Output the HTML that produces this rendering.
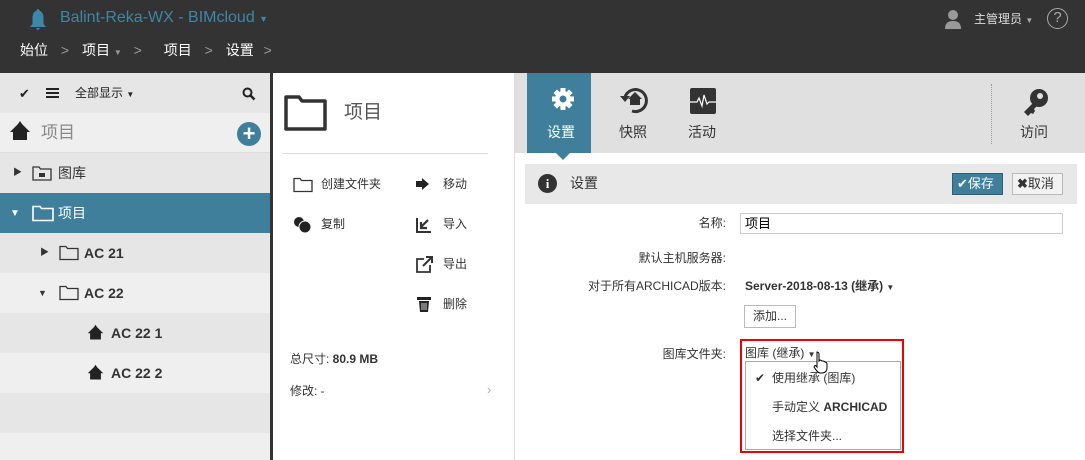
<!DOCTYPE html>
<html><head><meta charset="utf-8"><style>
*{margin:0;padding:0;box-sizing:border-box}
body{width:1085px;height:460px;overflow:hidden;position:relative;font-family:"Liberation Sans","Noto Sans CJK SC",sans-serif;font-size:12px;color:#333;background:#fff}
.a{position:absolute}
.t{position:absolute;white-space:nowrap;line-height:1.2}
.r{position:absolute;white-space:nowrap;line-height:1.2;right:359px;text-align:right}
.row{position:absolute;left:0;width:270px;height:40px}
</style></head><body>
<div class="a" style="left:0;top:0;width:1085px;height:73px;background:#333"></div>
<svg class="a" style="left:28px;top:8px" width="20" height="24" viewBox="0 0 20 24"><path d="M10 1c-1 0-1.5 1-1.5 1.8C5 4 4.5 7 4.5 11v5L2 19h16l-2.5-3v-5c0-4-.5-7-4-8.2C11.5 2 11 1 10 1z M8 20h4l-2 2.5z" fill="#3f87a6"/></svg>
<div class="t" style="left:60px;top:8px;font-size:16px;color:#3f87a6">Balint-Reka-WX - BIMcloud <span style="font-size:9px">▼</span></div>
<div class="t" style="left:20px;top:42px;font-size:14px;color:#fff">始位 <span style="color:#999;margin:0 9px">&gt;</span> 项目 <span style="color:#999;font-size:8px">▼</span> <span style="color:#999;margin:0 18px 0 8px">&gt;</span> 项目 <span style="color:#999;margin:0 9px">&gt;</span> 设置 <span style="color:#999;margin:0 6px">&gt;</span></div>
<svg class="a" style="left:944px;top:9px" width="18" height="20" viewBox="0 0 18 20"><circle cx="9" cy="6" r="5" fill="#999"/><path d="M1 20c0-6 3-8 8-8s8 2 8 8z" fill="#999"/></svg>
<div class="t" style="left:974px;top:12px;font-size:12px;color:#ddd">主管理员 <span style="font-size:8px;color:#aaa">▼</span></div>
<div class="a" style="left:1047px;top:8px;width:21px;height:21px;border:1.5px solid #aaa;border-radius:50%;color:#aaa;font-size:15px;text-align:center;line-height:18px">?</div>

<div class="a" style="left:0;top:73px;width:270px;height:387px;background:#efefef"></div>
<div class="row" style="top:73px;background:#e6e6e6"></div>
<div class="t" style="left:19px;top:86px;font-size:13px;color:#222">✔</div>
<div class="a" style="left:46px;top:88px;width:13px;height:2px;background:#222;box-shadow:0 4px #222,0 8px #222"></div>
<div class="t" style="left:75px;top:86px;font-size:12px;color:#222">全部显示 <span style="font-size:8px">▼</span></div>
<svg class="a" style="left:242px;top:87px" width="14" height="14"><circle cx="5.5" cy="5.5" r="4" fill="none" stroke="#222" stroke-width="2"/><path d="M8.5 8.5l4 4" stroke="#222" stroke-width="2.5"/></svg>
<div class="row" style="top:113px;background:#efefef;border-bottom:1px solid #ddd"></div>
<svg class="a" style="left:9px;top:120px" width="22" height="22" viewBox="0 0 22 22"><path d="M11 1l-2 3L1 12h3v8h14v-8h3l-8-8z" fill="#222"/></svg>
<div class="t" style="left:41px;top:123px;font-size:17px;color:#888">项目</div>
<div class="a" style="left:237px;top:122px;width:24px;height:24px;border-radius:50%;background:#3f7f9b;color:#fff;font-weight:bold;font-size:22px;text-align:center;line-height:24px">+</div>
<div class="row" style="top:153px;background:#e6e6e6"></div>
<div class="t" style="left:13px;top:167px;font-size:9px">▶</div>
<svg class="a" style="left:32px;top:165px" width="20" height="16"><path d="M1 2h6l1.5 2H19v11H1z" fill="none" stroke="#333" stroke-width="1.3"/><rect x="7" y="8" width="6" height="4" fill="#333"/></svg>
<div class="t" style="left:58px;top:165px;font-size:14px">图库</div>
<div class="row" style="top:193px;background:#3f7f9b"></div>
<div class="t" style="left:10px;top:208px;font-size:10px;color:#fff">▼</div>
<svg class="a" style="left:32px;top:205px" width="22" height="17"><path d="M1 1.5h7l1.5 2H21v12H1z" fill="none" stroke="#fff" stroke-width="1.6"/></svg>
<div class="t" style="left:58px;top:205px;font-size:14px;color:#fff">项目</div>
<div class="row" style="top:233px;background:#e6e6e6"></div>
<div class="t" style="left:40px;top:247px;font-size:9px">▶</div>
<svg class="a" style="left:59px;top:245px" width="20" height="16"><path d="M1 1.5h6l1.5 2H19v11H1z" fill="none" stroke="#333" stroke-width="1.3"/></svg>
<div class="t" style="left:84px;top:245px;font-size:14px;font-weight:bold">AC 21</div>
<div class="row" style="top:273px;background:#efefef"></div>
<div class="t" style="left:38px;top:288px;font-size:9px">▼</div>
<svg class="a" style="left:59px;top:285px" width="20" height="16"><path d="M1 1.5h6l1.5 2H19v11H1z" fill="none" stroke="#333" stroke-width="1.3"/></svg>
<div class="t" style="left:84px;top:285px;font-size:14px;font-weight:bold">AC 22</div>
<div class="row" style="top:313px;background:#e6e6e6"></div>
<svg class="a" style="left:87px;top:324px" width="17" height="17" viewBox="0 0 22 22"><path d="M11 1l-2 3L1 12h3v8h14v-8h3l-8-8z" fill="#222"/></svg>
<div class="t" style="left:111px;top:325px;font-size:14px;font-weight:bold">AC 22 1</div>
<div class="row" style="top:353px;background:#efefef"></div>
<svg class="a" style="left:87px;top:364px" width="17" height="17" viewBox="0 0 22 22"><path d="M11 1l-2 3L1 12h3v8h14v-8h3l-8-8z" fill="#222"/></svg>
<div class="t" style="left:111px;top:365px;font-size:14px;font-weight:bold">AC 22 2</div>
<div class="row" style="top:393px;background:#e6e6e6"></div>
<div class="a" style="left:270px;top:73px;width:3px;height:387px;background:#333"></div>

<svg class="a" style="left:284px;top:94px" width="44" height="38"><path d="M2 3h13l3 4h23v28H2z" fill="none" stroke="#333" stroke-width="3.5" stroke-linejoin="round"/></svg>
<div class="t" style="left:344px;top:102px;font-size:19px;color:#555">项目</div>
<div class="a" style="left:282px;top:153px;width:206px;height:1px;background:#ddd"></div>
<svg class="a" style="left:293px;top:177px" width="20" height="16"><path d="M1 1.5h6l1.5 2H19v11H1z" fill="none" stroke="#333" stroke-width="1.3"/></svg>
<div class="t" style="left:321px;top:177px">创建文件夹</div>
<svg class="a" style="left:293px;top:216px" width="20" height="18"><circle cx="6" cy="6" r="5" fill="#222"/><circle cx="12" cy="11" r="6" fill="#222" stroke="#fff" stroke-width="1"/></svg>
<div class="t" style="left:321px;top:217px">复制</div>
<svg class="a" style="left:416px;top:178px" width="14" height="12"><path d="M0 3h6V0l7 6-7 6V9H0z" fill="#222"/></svg>
<div class="t" style="left:443px;top:177px">移动</div>
<svg class="a" style="left:416px;top:217px" width="16" height="16"><path d="M1 1v14h14" fill="none" stroke="#333" stroke-width="2"/><path d="M12 3L5 10M5 5v6h6" fill="none" stroke="#333" stroke-width="2.2"/></svg>
<div class="t" style="left:443px;top:217px">导入</div>
<svg class="a" style="left:416px;top:256px" width="17" height="17"><path d="M8 3H1v13h13V9" fill="none" stroke="#333" stroke-width="1.8"/><path d="M7 10l8-8M10 1h6v6" fill="none" stroke="#333" stroke-width="2"/></svg>
<div class="t" style="left:443px;top:257px">导出</div>
<svg class="a" style="left:417px;top:296px" width="14" height="16"><rect x="0" y="1" width="14" height="3" fill="#222"/><path d="M2 5h10l-1 11H3z" fill="#222"/><path d="M5 7v7M7 7v7M9 7v7" stroke="#fff" stroke-width=".8"/></svg>
<div class="t" style="left:443px;top:297px">删除</div>
<div class="t" style="left:290px;top:352px;font-size:12px">总尺寸: <b>80.9 MB</b></div>
<div class="t" style="left:290px;top:384px;font-size:12px">修改: -</div>
<div class="t" style="left:487px;top:382px;font-size:13px;color:#aaa">›</div>
<div class="a" style="left:514px;top:73px;width:1px;height:387px;background:#ddd"></div>

<div class="a" style="left:515px;top:73px;width:570px;height:80px;background:#e0e0e0"></div>
<div class="a" style="left:527px;top:73px;width:64px;height:80px;background:#3f7f9b"></div>
<div class="a" style="left:556px;top:153px;width:0;height:0;border-left:7px solid transparent;border-right:7px solid transparent;border-top:7px solid #3f7f9b"></div>
<svg class="a" style="left:551px;top:87px" width="24" height="24" viewBox="0 0 24 24"><g fill="#fff"><circle cx="12" cy="12" r="8"/><rect x="9.5" y="1" width="5" height="22"/><rect x="1" y="9.5" width="22" height="5"/><rect x="9.5" y="1" width="5" height="22" transform="rotate(45 12 12)"/><rect x="9.5" y="1" width="5" height="22" transform="rotate(-45 12 12)"/></g><circle cx="12" cy="12" r="3.5" fill="#3f7f9b"/></svg>
<div class="t" style="left:547px;top:124px;font-size:14px;color:#fff">设置</div>
<svg class="a" style="left:618px;top:85px" width="34" height="30" viewBox="0 0 34 30"><path d="M7 12A11 11 0 1 1 14 26" fill="none" stroke="#333" stroke-width="3"/><path d="M2 11h10l-5 6z" fill="#333"/><path d="M17 7l-7 7h2v6h10v-6h2z" fill="#333"/></svg>
<div class="t" style="left:619px;top:124px;font-size:14px">快照</div>
<svg class="a" style="left:690px;top:88px" width="26" height="26"><rect width="26" height="26" rx="2" fill="#333"/><path d="M0 14h7l2-4 3 8 2-11 3 9 2-2h7" fill="none" stroke="#fff" stroke-width="1.2"/></svg>
<div class="t" style="left:688px;top:124px;font-size:14px">活动</div>
<div class="a" style="left:991px;top:84px;width:0;height:60px;border-left:1px dotted #999"></div>
<svg class="a" style="left:1022px;top:88px" width="28" height="30" viewBox="0 0 28 30"><circle cx="17" cy="10" r="9" fill="#333"/><circle cx="18" cy="8" r="3" fill="#e0e0e0"/><path d="M11 15L2 24l4 4 3-3 2 1 2-3-1-2 4-4z" fill="#333"/></svg>
<div class="t" style="left:1020px;top:124px;font-size:14px">访问</div>

<div class="a" style="left:525px;top:164px;width:552px;height:40px;background:#e8e8e8"></div>
<div class="a" style="left:538px;top:174px;width:19px;height:19px;border-radius:50%;background:#333;color:#fff;font-weight:bold;font-size:13px;text-align:center;line-height:19px;font-family:'Liberation Serif',serif">i</div>
<div class="t" style="left:570px;top:175px;font-size:14px">设置</div>
<div class="a" style="left:952px;top:173px;width:51px;height:22px;background:#3f7f9b;border:1px solid #2d6178;color:#fff;font-size:13px;line-height:20px;padding-left:4px;white-space:nowrap">✔保存</div>
<div class="a" style="left:1012px;top:173px;width:51px;height:22px;background:#f2f2f2;border:1px solid #bbb;font-size:13px;line-height:20px;padding-left:4px;white-space:nowrap"><b>✖</b>取消</div>
<div class="r" style="top:216px">名称:</div>
<div class="a" style="left:740px;top:213px;width:323px;height:21px;border:1px solid #ccc;font-size:13px;line-height:19px;padding-left:4px;color:#000">项目</div>
<div class="r" style="top:251px">默认主机服务器:</div>
<div class="r" style="top:279px">对于所有ARCHICAD版本:</div>
<div class="t" style="left:745px;top:279px;font-size:12px;font-weight:bold">Server-2018-08-13 (继承) <span style="font-size:8px">▼</span></div>
<div class="a" style="left:744px;top:305px;width:52px;height:23px;border:1px solid #bbb;background:#fff;font-size:12px;line-height:21px;text-align:center">添加...</div>
<div class="r" style="top:347px">图库文件夹:</div>
<div class="a" style="left:740px;top:339px;width:164px;height:114px;border:2px solid #e00"></div>
<div class="t" style="left:745px;top:346px;font-size:12px">图库 (继承) <span style="font-size:8px">▼</span></div>
<div class="a" style="left:745px;top:361px;width:156px;height:89px;border:1px solid #aaa;background:#fff"></div>
<div class="t" style="left:755px;top:371px;font-size:12px">✔</div>
<div class="t" style="left:772px;top:371px;font-size:12px">使用继承 (图库)</div>
<div class="t" style="left:772px;top:400px;font-size:12px">手动定义 <b>ARCHICAD</b></div>
<div class="t" style="left:772px;top:429px;font-size:12px">选择文件夹...</div>
<svg class="a" style="left:813px;top:350px" width="16" height="24" viewBox="0 0 16 24"><path d="M4 2c1 0 2 1 2 2v7l1-1c1 0 2 1 2 1l1 0c1 0 2 1 2 1 1 0 2 1 2 2v4c0 3-2 5-5 5H7c-2 0-4-3-6-6 0-1 1-2 2-1l1 1V4c0-1 0-2 0-2z" fill="#fff" stroke="#000" stroke-width="1"/></svg>
</body></html>
